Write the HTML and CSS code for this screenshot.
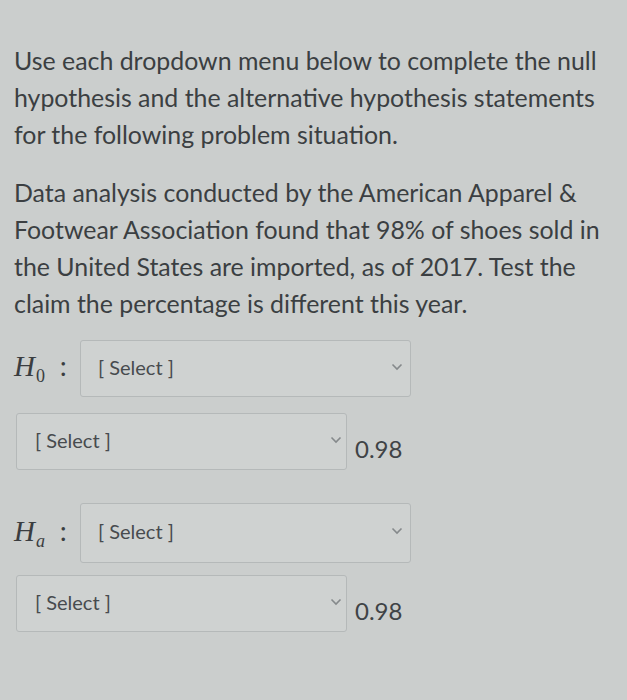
FILE: index.html
```html
<!DOCTYPE html>
<html>
<head>
<meta charset="utf-8">
<link rel="stylesheet" href="styles.css">
</head>
<body>
<div class="page">
  <p class="para first">Use each dropdown menu below to complete the null hypothesis and the alternative hypothesis statements for the following problem situation.</p>
  <p class="para second">Data analysis conducted by the American Apparel &amp; Footwear Association found that 98% of shoes sold in the United States are imported, as of 2017. Test the claim the percentage is different this year.</p>

  <div class="row row-h0">
    <span class="label"><i>H</i><sub>0</sub> :</span>
    <div class="select wide">
      <span class="sel-text">[ Select ]</span>
      <svg class="chev" width="12" height="8" viewBox="0 0 12 8"><path d="M1.5 1.5 L6 6 L10.5 1.5" fill="none" stroke="#85898b" stroke-width="1.6"/></svg>
    </div>
  </div>
  <div class="row row-val">
    <div class="select narrow">
      <span class="sel-text">[ Select ]</span>
      <svg class="chev" width="12" height="8" viewBox="0 0 12 8"><path d="M1.5 1.5 L6 6 L10.5 1.5" fill="none" stroke="#85898b" stroke-width="1.6"/></svg>
    </div>
    <span class="value">0.98</span>
  </div>

  <div class="row row-ha">
    <span class="label"><i>H</i><sub><i>a</i></sub> :</span>
    <div class="select wide">
      <span class="sel-text">[ Select ]</span>
      <svg class="chev" width="12" height="8" viewBox="0 0 12 8"><path d="M1.5 1.5 L6 6 L10.5 1.5" fill="none" stroke="#85898b" stroke-width="1.6"/></svg>
    </div>
  </div>
  <div class="row row-val last">
    <div class="select narrow">
      <span class="sel-text">[ Select ]</span>
      <svg class="chev" width="12" height="8" viewBox="0 0 12 8"><path d="M1.5 1.5 L6 6 L10.5 1.5" fill="none" stroke="#85898b" stroke-width="1.6"/></svg>
    </div>
    <span class="value">0.98</span>
  </div>
</div>
</body>
</html>
```

FILE: styles.css
```css
html, body {
  margin: 0;
  padding: 0;
  background: #cbcecd;
}
body {
  width: 627px;
  height: 700px;
  overflow: hidden;
  font-family: Lato, "Open Sans", sans-serif;
  color: #3b3f42;
}
.page {
  width: 600px;
  padding: 42px 0 0 14px;
}
.para {
  margin: 0;
  font-size: 24.9px;
  line-height: 37px;
}
.para.second {
  margin-top: 21px;
}
.row {
  display: flex;
  align-items: center;
}
.row-h0 {
  margin-top: 18px;
}
.row-ha {
  margin-top: 33px;
}
.row-val {
  margin-top: 16px;
  padding-left: 2px;
}
.row-val.last {
  margin-top: 12px;
}
.label {
  width: 66px;
  font-family: "Liberation Serif", "DejaVu Serif", serif;
  font-size: 29px;
  color: #3a3d40;
  white-space: nowrap;
}
.label sub {
  font-size: 18px;
  vertical-align: -6px;
  margin-left: 1px;
  margin-right: 7px;
}
.select {
  box-sizing: border-box;
  display: flex;
  align-items: center;
  justify-content: space-between;
  height: 57px;
  border: 1.5px solid #b5b9b9;
  border-radius: 3px;
  background: #cfd2d1;
  padding: 0 7px 4px 17px;
}
.select.wide {
  width: 331px;
}
.row-ha .select.wide {
  height: 60px;
}
.select.narrow {
  width: 331px;
  padding-left: 18px;
  padding-right: 4px;
}
.sel-text {
  font-size: 20px;
  color: #474b4e;
}
.chev {
  display: block;
}
.value {
  margin-left: 8px;
  margin-top: 14px;
  font-size: 24px;
  color: #3f4346;
}
```
